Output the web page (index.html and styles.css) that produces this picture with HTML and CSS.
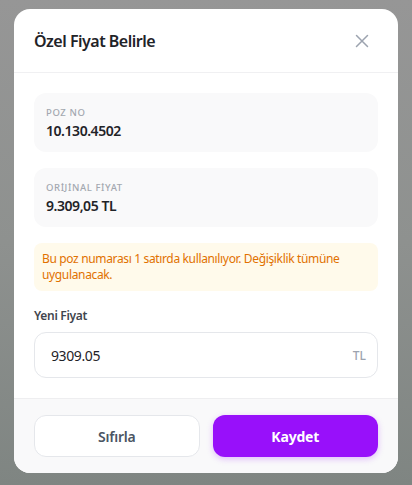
FILE: index.html
```html
<!DOCTYPE html>
<html lang="tr">
<head>
<meta charset="utf-8">
<link rel="stylesheet" href="styles.css">
</head>
<body>
<div class="backdrop">
  <div class="modal">
    <div class="modal-header">
      <h2 class="title">Özel Fiyat Belirle</h2>
      <button class="close" aria-label="Kapat">
        <svg width="14" height="14" viewBox="0 0 14 14"><path d="M1.5 1.5L12.5 12.5M12.5 1.5L1.5 12.5" stroke="#9ca3af" stroke-width="1.5" stroke-linecap="round"/></svg>
      </button>
    </div>
    <div class="modal-body">
      <div class="info-card">
        <div class="info-label">POZ NO</div>
        <div class="info-value">10.130.4502</div>
      </div>
      <div class="info-card">
        <div class="info-label">ORİJİNAL FİYAT</div>
        <div class="info-value">9.309,05 TL</div>
      </div>
      <div class="warning">Bu poz numarası 1 satırda kullanılıyor. Değişiklik tümüne uygulanacak.</div>
      <div class="field">
        <label class="field-label">Yeni Fiyat</label>
        <div class="input-wrap">
          <span class="input-value">9309.05</span>
          <span class="suffix">TL</span>
        </div>
      </div>
    </div>
    <div class="modal-footer">
      <button class="btn btn-secondary">Sıfırla</button>
      <button class="btn btn-primary">Kaydet</button>
    </div>
  </div>
</div>
</body>
</html>
```
FILE: styles.css
```css
* { box-sizing: border-box; }
html, body { margin: 0; padding: 0; }
body {
  font-family: "Noto Sans", "Open Sans", sans-serif;
  width: 412px;
  height: 485px;
  overflow: hidden;
}
.backdrop {
  width: 412px;
  height: 485px;
  background: linear-gradient(180deg, #969696 0%, #8e918f 50%, #7f8582 100%);
  padding: 9px 14px 0;
}
.modal {
  width: 384px;
  height: 464px;
  background: #fff;
  border-radius: 16px;
  overflow: hidden;
  display: flex;
  flex-direction: column;
}
.modal-header {
  height: 65px;
  border-bottom: 1px solid #f0f0f2;
  display: flex;
  align-items: center;
  justify-content: space-between;
  padding: 0 29px 0 20px;
}
.title {
  margin: 0;
  font-size: 16px;
  font-weight: 600;
  color: #1f2328;
  letter-spacing: -0.5px;
}
.close {
  border: 0;
  background: none;
  padding: 0;
  width: 14px;
  height: 14px;
  display: flex;
}
.modal-body {
  padding: 20px 20px 20px;
  display: flex;
  flex-direction: column;
  gap: 16px;
  flex: 1;
}
.info-card {
  background: #f9f9fa;
  border-radius: 12px;
  height: 59px;
  padding: 13px 12px 0;
  display: flex;
  flex-direction: column;
  gap: 2px;
}
.info-label {
  font-size: 9.5px;
  color: #a3a8b0;
  font-weight: 500;
  letter-spacing: 0.6px;
  line-height: 13px;
}
.info-value {
  font-size: 14px;
  font-weight: 600;
  color: #1f2328;
  line-height: 20px;
  letter-spacing: -0.45px;
}
.warning {
  background: #fffaeb;
  border-radius: 8px;
  padding: 8px 8px;
  font-size: 12px;
  line-height: 16px;
  color: #e17100;
  height: 48px;
  letter-spacing: -0.35px;
}
.field {
  display: flex;
  flex-direction: column;
  gap: 8px;
  margin-top: 1px;
}
.field-label {
  font-size: 12px;
  font-weight: 600;
  color: #3f454d;
  line-height: 16px;
  letter-spacing: -0.3px;
}
.input-wrap {
  height: 46px;
  border: 1px solid #e5e7eb;
  border-radius: 12px;
  display: flex;
  align-items: center;
  justify-content: space-between;
  padding: 0 11px 0 16px;
}
.input-value {
  font-size: 14px;
  color: #1f2328;
  letter-spacing: -0.4px;
}
.suffix {
  font-size: 12px;
  color: #9ca3af;
  font-weight: 500;
}
.modal-footer {
  background: #f9f9fa;
  border-top: 1px solid #eeeef0;
  height: 75px;
  padding: 16px 20px;
  display: grid;
  grid-template-columns: 1fr 1fr;
  gap: 13px;
}
.btn {
  height: 42px;
  border-radius: 12px;
  font-family: inherit;
  font-size: 14px;
}
.btn-secondary {
  background: #fff;
  border: 1px solid #e5e7eb;
  color: #4b5563;
  font-weight: 600;
  letter-spacing: -0.2px;
}
.btn-primary {
  background: #9810fa;
  border: 0;
  color: #fff;
  font-weight: 700;
  letter-spacing: -0.2px;
  box-shadow: 0 2px 6px rgba(152,16,250,0.25);
}
```
